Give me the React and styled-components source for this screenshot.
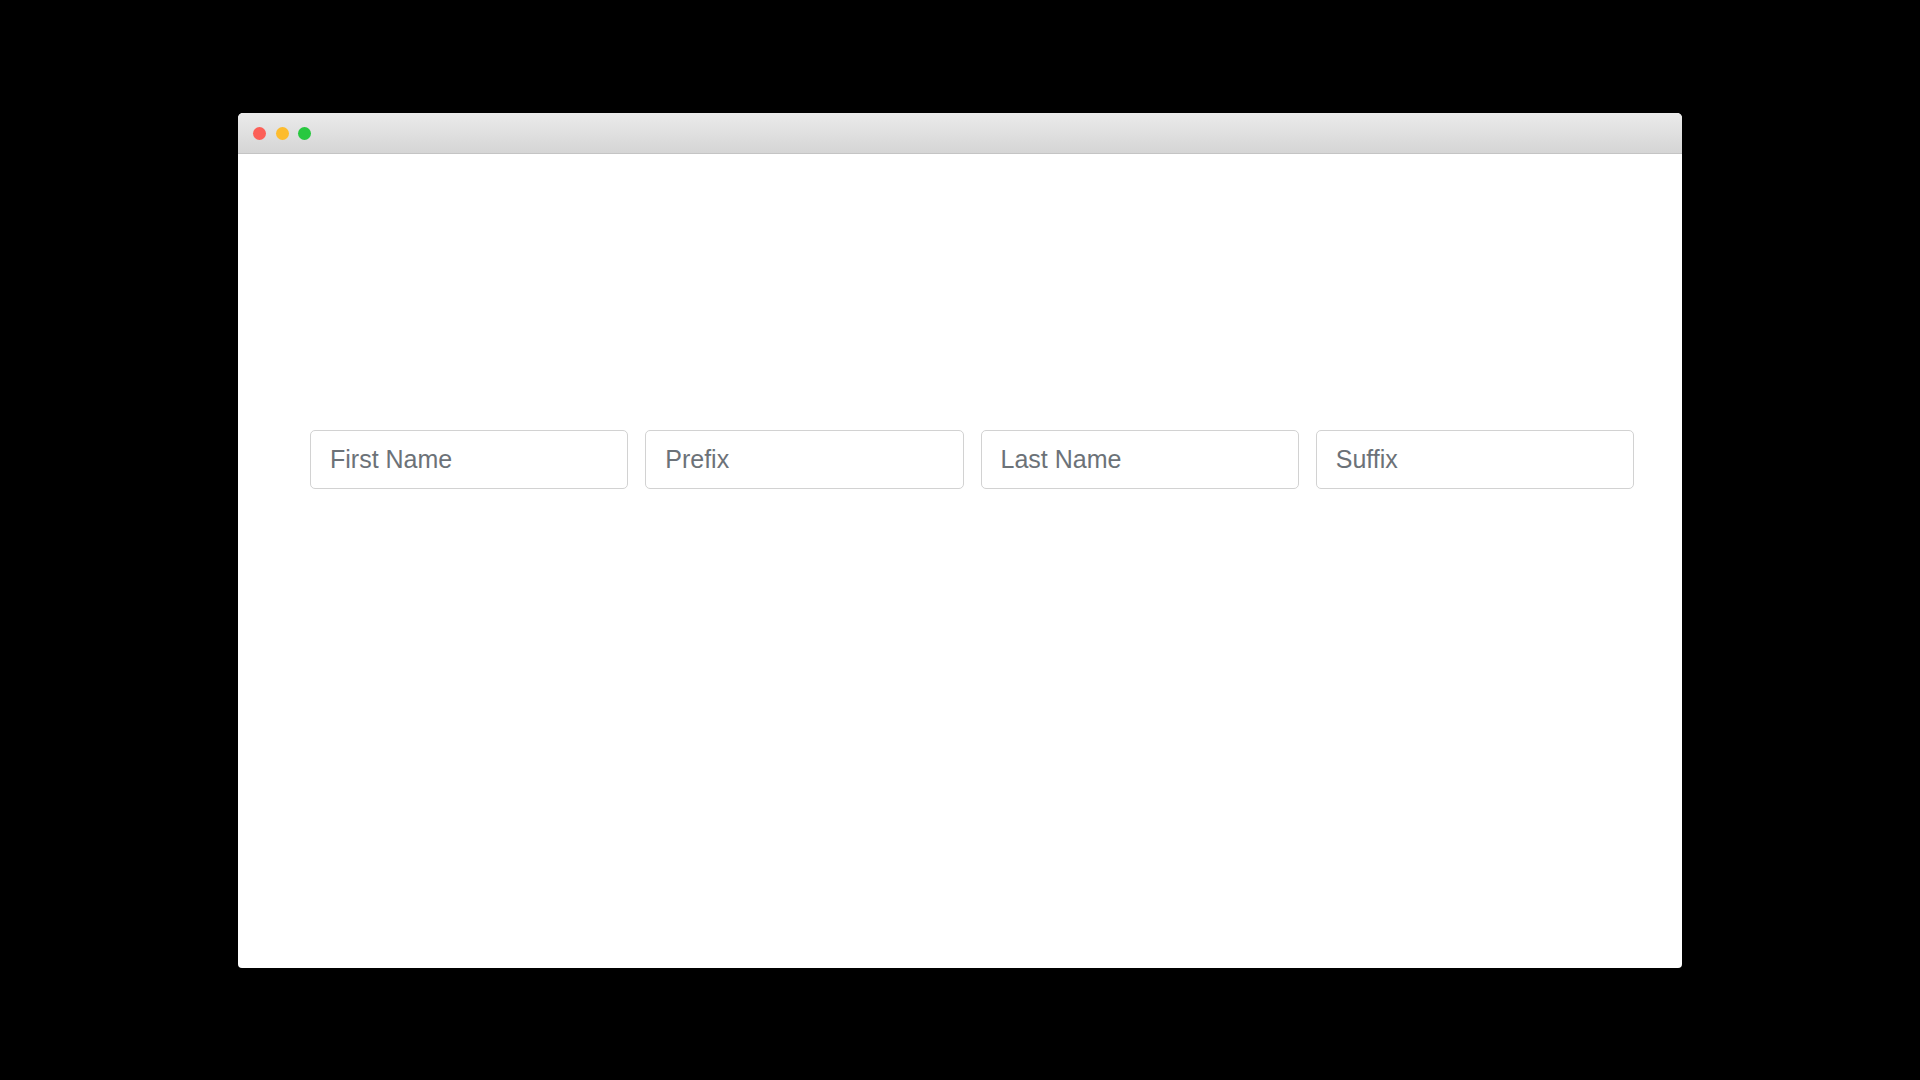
import React from 'react';
import styled, { createGlobalStyle } from 'styled-components';

const GlobalStyle = createGlobalStyle`
  html, body {
    margin: 0;
    padding: 0;
    background: #000;
  }
  body {
    font-family: "Liberation Sans", Arial, sans-serif;
  }
`;

const Stage = styled.div`
  width: 1920px;
  height: 1080px;
  padding: 113px 0 0 238px;
  box-sizing: border-box;
`;

const Window = styled.div`
  width: 1444px;
  height: 855px;
  background: #fff;
  border-radius: 5px 5px 4px 4px;
  overflow: hidden;
  display: flex;
  flex-direction: column;
`;

const TitleBar = styled.div`
  height: 41px;
  flex: none;
  box-sizing: border-box;
  background: linear-gradient(#ebebeb, #d5d5d5);
  border-bottom: 1px solid #c4c4c4;
  display: flex;
  align-items: center;
  gap: 9.5px;
  padding: 1px 0 0 15px;
`;

const Light = styled.span`
  width: 13px;
  height: 13px;
  border-radius: 50%;
  background: ${p => p.color};
`;

const Content = styled.div`
  flex: 1;
  padding: 276px 48px 0 72px;
`;

const Row = styled.div`
  display: grid;
  grid-template-columns: repeat(4, 1fr);
  gap: 17px;
`;

const Field = styled.input`
  height: 59px;
  box-sizing: border-box;
  border: 1.5px solid #d2d2d2;
  border-radius: 5px;
  padding: 0 19px;
  font-family: "Liberation Sans", Arial, sans-serif;
  font-size: 25px;
  color: #495057;
  background: #fff;
  outline: none;
  min-width: 0;

  &::placeholder {
    color: #6c7278;
  }
`;

const fields = ['First Name', 'Prefix', 'Last Name', 'Suffix'];

export default function App() {
  return (
    <>
      <GlobalStyle />
      <Stage>
        <Window>
          <TitleBar>
            <Light color="#fc5f57" />
            <Light color="#fdbc2e" />
            <Light color="#28c83f" />
          </TitleBar>
          <Content>
            <Row>
              {fields.map(f => (
                <Field key={f} type="text" placeholder={f} />
              ))}
            </Row>
          </Content>
        </Window>
      </Stage>
    </>
  );
}
